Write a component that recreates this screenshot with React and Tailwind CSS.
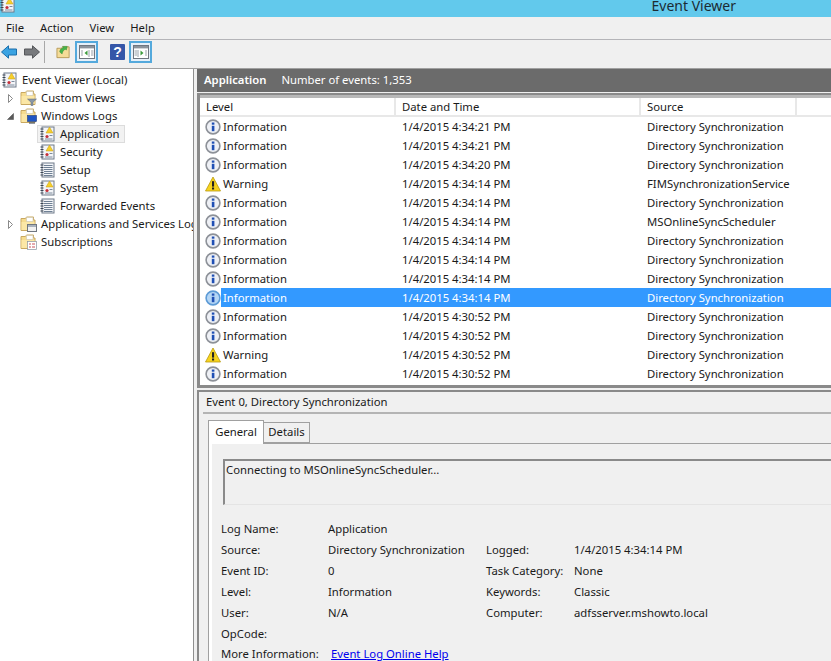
import React from "react";

const font = "font-['Noto_Sans','Open_Sans',sans-serif]";

const rows = [
  ["i", "1/4/2015 4:34:21 PM", "Directory Synchronization"],
  ["i", "1/4/2015 4:34:21 PM", "Directory Synchronization"],
  ["i", "1/4/2015 4:34:20 PM", "Directory Synchronization"],
  ["w", "1/4/2015 4:34:14 PM", "FIMSynchronizationService"],
  ["i", "1/4/2015 4:34:14 PM", "Directory Synchronization"],
  ["i", "1/4/2015 4:34:14 PM", "MSOnlineSyncScheduler"],
  ["i", "1/4/2015 4:34:14 PM", "Directory Synchronization"],
  ["i", "1/4/2015 4:34:14 PM", "Directory Synchronization"],
  ["i", "1/4/2015 4:34:14 PM", "Directory Synchronization"],
  ["i", "1/4/2015 4:34:14 PM", "Directory Synchronization"],
  ["i", "1/4/2015 4:30:52 PM", "Directory Synchronization"],
  ["i", "1/4/2015 4:30:52 PM", "Directory Synchronization"],
  ["w", "1/4/2015 4:30:52 PM", "Directory Synchronization"],
  ["i", "1/4/2015 4:30:52 PM", "Directory Synchronization"],
];

const InfoIcon = ({ selected }) => (
  <svg width="16" height="16" viewBox="0 0 16 16" className="shrink-0">
    <circle cx="8" cy="8" r="6.9" fill={selected ? "#b5d6f5" : "#eef0f5"} stroke={selected ? "#5d9bd6" : "#8d9198"} strokeWidth="1.6" />
    <rect x="6.8" y="6.8" width="2.6" height="5.4" fill="#1f4fb4" />
    <rect x="6.8" y="3.5" width="2.6" height="2.2" fill="#1f4fb4" />
  </svg>
);

const WarnIcon = () => (
  <svg width="16" height="16" viewBox="0 0 16 16" className="shrink-0">
    <path d="M8 1 L15.5 15 H0.5 Z" fill="#f7d31e" stroke="#b99a10" strokeWidth="0.8" strokeLinejoin="round" />
    <rect x="7" y="5.2" width="2.1" height="5.4" fill="#222" />
    <rect x="7" y="11.5" width="2.1" height="2" fill="#222" />
  </svg>
);

const LogIcon = ({ warn }) => (
  <svg width="15" height="16" viewBox="0 0 15 16" className="shrink-0">
    <rect x="2" y="1" width="12" height="14" fill="#f3f5f8" stroke="#6f7a8a" />
    <path d="M0.5 3h3M0.5 5.5h3M0.5 8h3M0.5 10.5h3M0.5 13h3" stroke="#3d4653" strokeWidth="1.1" />
    {warn ? (
      <>
        <path d="M9.5 1 L13 7 H6 Z" fill="#f6cf2a" stroke="#c49a14" strokeWidth="0.5" />
        <circle cx="7" cy="10.5" r="1.6" fill="#c4303a" />
        <path d="M9.5 9.5h3M5 13h7.5" stroke="#7d8a9c" />
      </>
    ) : (
      <path d="M4 3.5h8.5M4 5.5h8.5M4 7.5h8.5M4 9.5h8.5M4 11.5h8.5M4 13.5h8.5" stroke="#6f8094" />
    )}
  </svg>
);

const FolderIcon = ({ badge }) => (
  <svg width="17" height="16" viewBox="0 0 17 16" className="shrink-0">
    <path d="M1 2.5h4.5l1-1.5h7v3h1.5v10.5H1Z" fill="#f6dc8f" stroke="#c9a860" />
    <path d="M6.5 1.5h6.5v4H6.5Z" fill="#fff" stroke="#c9c4b4" strokeWidth="0.6" />
    <path d="M1.5 6h13v8H1.5Z" fill="#fbe7a6" />
    {badge === "filter" && <path d="M7.5 9h9l-3.5 3.2v3.3h-2v-3.3Z" fill="#8a97a6" stroke="#5f6b78" strokeWidth="0.5" />}
    {badge === "logs" && (
      <>
        <rect x="7.5" y="7.5" width="9" height="6" fill="#1f55c4" stroke="#1c3a7a" strokeWidth="0.6" />
        <path d="M9 15h6" stroke="#4a5563" strokeWidth="1.2" />
      </>
    )}
    {badge === "app" && (
      <>
        <rect x="7.5" y="8.5" width="9" height="7" fill="#f2f2f2" stroke="#6f7680" />
        <rect x="8" y="9" width="8" height="2" fill="#aab2bc" />
      </>
    )}
    {badge === "sub" && (
      <>
        <rect x="7.5" y="7.5" width="9" height="8" fill="#fff" stroke="#8893a0" strokeWidth="0.7" />
        <path d="M9 10h2M12 10h3M9 13h2M12 13h3" stroke="#c4404a" strokeWidth="0.9" />
      </>
    )}
  </svg>
);

const Arrow = ({ open }) =>
  open ? (
    <svg width="9" height="9" viewBox="0 0 9 9" className="shrink-0">
      <path d="M7.5 1.5V7.5H1.5Z" fill="#595959" stroke="#595959" strokeWidth="0.6" />
    </svg>
  ) : (
    <svg width="9" height="9" viewBox="0 0 9 9" className="shrink-0">
      <path d="M2.5 0.5L6.5 4.5L2.5 8.5Z" fill="#fff" stroke="#8a8a8a" />
    </svg>
  );

const TreeRow = ({ indent, arrow, icon, label }) => (
  <div className={`flex h-[18px] items-center whitespace-nowrap ${indent}`}>
    {arrow !== undefined && (
      <span className="flex w-[16px] shrink-0 justify-start pl-[2px]">
        <Arrow open={arrow} />
      </span>
    )}
    {icon}
    <span className="ml-[2px] px-[2px] leading-[18px]">{label}</span>
  </div>
);

const Detail = ({ k, v, k2, v2 }) => (
  <div className="flex h-[21px] items-center whitespace-nowrap">
    <span className="w-[107px] shrink-0">{k}</span>
    <span className="w-[158px] shrink-0">{v}</span>
    <span className="w-[88px] shrink-0">{k2}</span>
    <span>{v2}</span>
  </div>
);

export default function App() {
  return (
    <div className={`flex h-[661px] w-[831px] flex-col overflow-hidden bg-[#f0f0f0] text-[11.3px] text-[#1a1a1a] ${font}`}>
      {/* title bar */}
      <div className="relative h-[17px] shrink-0 bg-[#62c9ec]">
        <span className="absolute left-0 top-[-3px]"><LogIcon warn /></span>
        <span className="absolute right-[95px] top-[-4px] text-[14px] leading-[20px] text-[#1c2b33]">Event Viewer</span>
      </div>

      {/* menu */}
      <div className="flex h-[23px] shrink-0 items-center gap-[16px] border-b border-[#b4b4b8] pl-[6px] leading-[22px]">
        <span>File</span>
        <span>Action</span>
        <span>View</span>
        <span>Help</span>
      </div>

      {/* toolbar */}
      <div className="flex h-[29px] shrink-0 items-center border-b border-[#a0a0a0] pb-[4px] pl-[1px]">
        <svg width="16" height="14" viewBox="0 0 16 14" className="shrink-0">
          <path d="M0.5 7L7.5 0.8V4H15.5V10H7.5V13.2Z" fill="#3ba3e2" stroke="#1c6fab" />
        </svg>
        <svg width="16" height="14" viewBox="0 0 16 14" className="ml-[7px] shrink-0">
          <path d="M15.5 7L8.5 0.8V4H0.5V10H8.5V13.2Z" fill="#77797c" stroke="#55575a" />
        </svg>
        <span className="ml-[4px] h-[22px] w-[1px] bg-[#a8a8a8]" />
        <svg width="15" height="16" viewBox="0 0 16 16" className="ml-[11px] shrink-0">
          <path d="M1 4h5l1-1.5h7V14H1Z" fill="#f5dc97" stroke="#b89a58" />
          <path d="M4 8 C4 5 6 4 8 3.5 L7 2 L12 2 L11 6 L10 5 C8 6 7 7 6.5 10Z" fill="#46b54a" stroke="#2f8a33" strokeWidth="0.5" />
        </svg>
        <span className="ml-[4px] flex h-[22px] w-[23px] items-center justify-center border-2 border-[#54a9dc] bg-[#e6f0f9]">
          <svg width="16" height="14" viewBox="0 0 16 14">
            <rect x="0.5" y="0.5" width="15" height="13" fill="#fff" stroke="#6f7680" />
            <rect x="1" y="1" width="14" height="2.4" fill="#8c939b" />
            <path d="M10 5v7M12 6h2.5M12 8h2.5M12 10h2.5M2 6h2M2 8h2M2 10h2" stroke="#9aa2ab" />
            <path d="M8.5 5.5V10.5L5.5 8Z" fill="#3c9c3c" />
          </svg>
        </span>
        <svg width="15" height="16" viewBox="0 0 15 16" className="ml-[12px] shrink-0">
          <rect width="15" height="16" rx="1" fill="#3556a8" />
          <text x="7.5" y="13" textAnchor="middle" fontSize="14" fontWeight="700" fill="#fff" fontFamily="Liberation Sans">?</text>
        </svg>
        <span className="ml-[4px] flex h-[22px] w-[23px] items-center justify-center border-2 border-[#54a9dc] bg-[#e6f0f9]">
          <svg width="16" height="14" viewBox="0 0 16 14">
            <rect x="0.5" y="0.5" width="15" height="13" fill="#fff" stroke="#6f7680" />
            <rect x="1" y="1" width="14" height="2.4" fill="#8c939b" />
            <path d="M5 5v7M1.5 6h2.5M1.5 8h2.5M1.5 10h2.5M12 6h2M12 8h2M12 10h2" stroke="#9aa2ab" />
            <path d="M7.5 5.5V10.5L10.5 8Z" fill="#3c9c3c" />
          </svg>
        </span>
      </div>

      {/* body */}
      <div className="flex min-h-0 flex-1">
        {/* tree */}
        <div className="w-[194px] shrink-0 overflow-hidden border-r border-[#8f8f8f] bg-white pt-[2px]">
          <TreeRow indent="pl-[2px] [&>span]:ml-[3px]" icon={<LogIcon warn />} label="Event Viewer (Local)" />
          <TreeRow indent="pl-[4px]" arrow={false} icon={<FolderIcon badge="filter" />} label="Custom Views" />
          <TreeRow indent="pl-[4px]" arrow={true} icon={<FolderIcon badge="logs" />} label="Windows Logs" />
          <div className="ml-[37px] flex h-[18px] w-[88px] items-center whitespace-nowrap border border-[#dcdcdc] bg-[#f2f2f2] pl-[2px]">
            <LogIcon warn />
            <span className="ml-[5px]">Application</span>
          </div>
          <TreeRow indent="pl-[40px] [&>span]:ml-[3px]" icon={<LogIcon warn />} label="Security" />
          <TreeRow indent="pl-[40px] [&>span]:ml-[3px]" icon={<LogIcon />} label="Setup" />
          <TreeRow indent="pl-[40px] [&>span]:ml-[3px]" icon={<LogIcon warn />} label="System" />
          <TreeRow indent="pl-[40px] [&>span]:ml-[3px]" icon={<LogIcon />} label="Forwarded Events" />
          <TreeRow indent="pl-[4px]" arrow={false} icon={<FolderIcon badge="app" />} label="Applications and Services Logs" />
          <TreeRow indent="pl-[20px]" icon={<FolderIcon badge="sub" />} label="Subscriptions" />
        </div>

        {/* right side */}
        <div className="flex min-w-0 flex-1 flex-col pl-[3px]">
          <div className="flex h-[23px] shrink-0 items-center whitespace-nowrap bg-[#6b6b6b] pl-[7px] text-white">
            <span className="font-semibold">Application</span>
            <span className="ml-[15px]">Number of events: 1,353</span>
          </div>

          {/* event list */}
          <div className="mt-[1px] h-[295px] shrink-0 overflow-hidden border-b-[3px] border-l-[3px] border-t-2 border-[#8a8a8a] bg-white">
            <div className="border-t-[3px] border-[#b8b8b8]">
              <div className="flex h-[19px] items-center whitespace-nowrap border-b-2 border-[#e8e8e8]">
                <div className="h-full w-[196px] border-r-2 border-[#e8e8e8] pl-[6px] leading-[17px]">Level</div>
                <div className="h-full w-[245px] border-r-2 border-[#e8e8e8] pl-[6px] leading-[17px]">Date and Time</div>
                <div className="h-full w-[156px] border-r-2 border-[#e8e8e8] pl-[6px] leading-[17px]">Source</div>
              </div>
              {rows.map(([type, time, source], i) => {
                const selected = i === 9;
                return (
                  <div key={i} className="flex h-[19px] items-center whitespace-nowrap">
                    <div className="flex w-[21px] shrink-0 justify-end">
                      {type === "i" ? <InfoIcon selected={selected} /> : <WarnIcon />}
                    </div>
                    <div className={`flex h-full flex-1 items-center pt-[2px] ${selected ? "bg-[#3399ff] text-white" : ""}`}>
                      <div className="w-[175px] shrink-0 pl-[2px]">{type === "i" ? "Information" : "Warning"}</div>
                      <div className="w-[245px] shrink-0 pl-[6px]">{time}</div>
                      <div className="shrink-0 pl-[6px]">{source}</div>
                    </div>
                  </div>
                );
              })}
            </div>
          </div>

          {/* detail pane */}
          <div className="mt-[2px] min-h-0 flex-1 overflow-hidden border-l-2 border-t-2 border-[#8a8a8a]">
            <div className="ml-[4px] flex h-[22px] items-center border-b-2 border-[#b4b4b4] pl-[3px]">Event 0, Directory Synchronization</div>
            <div className="ml-[9px] mt-[6px] flex h-[23px] items-end">
              <div className="relative z-10 mb-[-1px] flex h-[24px] w-[56px] items-center justify-center border border-b-0 border-[#a0a0a0] bg-white">General</div>
              <div className="flex h-[21px] w-[46px] items-center justify-center border border-l-0 border-[#a0a0a0] bg-[#f0f0f0]">Details</div>
            </div>
            <div className="ml-[9px] border-l border-t border-[#a0a0a0] bg-white pl-[3px]">
              <div className="h-[217px] bg-[#f0f0f0] pl-[9px] pt-[15px]">
                <div className="ml-[2px] h-[46px] whitespace-nowrap border-b border-l-2 border-t-2 border-[#8a8a8a] border-b-[#e4e4e4] pl-[1px] pt-[1px] leading-[16px]">
                  Connecting to MSOnlineSyncScheduler...
                </div>
                <div className="mt-[14px]">
                  <Detail k="Log Name:" v="Application" />
                  <Detail k="Source:" v="Directory Synchronization" k2="Logged:" v2="1/4/2015 4:34:14 PM" />
                  <Detail k="Event ID:" v="0" k2="Task Category:" v2="None" />
                  <Detail k="Level:" v="Information" k2="Keywords:" v2="Classic" />
                  <Detail k="User:" v="N/A" k2="Computer:" v2="adfsserver.mshowto.local" />
                  <Detail k="OpCode:" />
                  <div className="flex h-[15px] items-end whitespace-nowrap leading-[13px]">
                    <span className="w-[110px] shrink-0">More Information:</span>
                    <span className="text-[#0000ee] underline">Event Log Online Help</span>
                  </div>
                </div>
              </div>
            </div>
          </div>
        </div>
      </div>
    </div>
  );
}
